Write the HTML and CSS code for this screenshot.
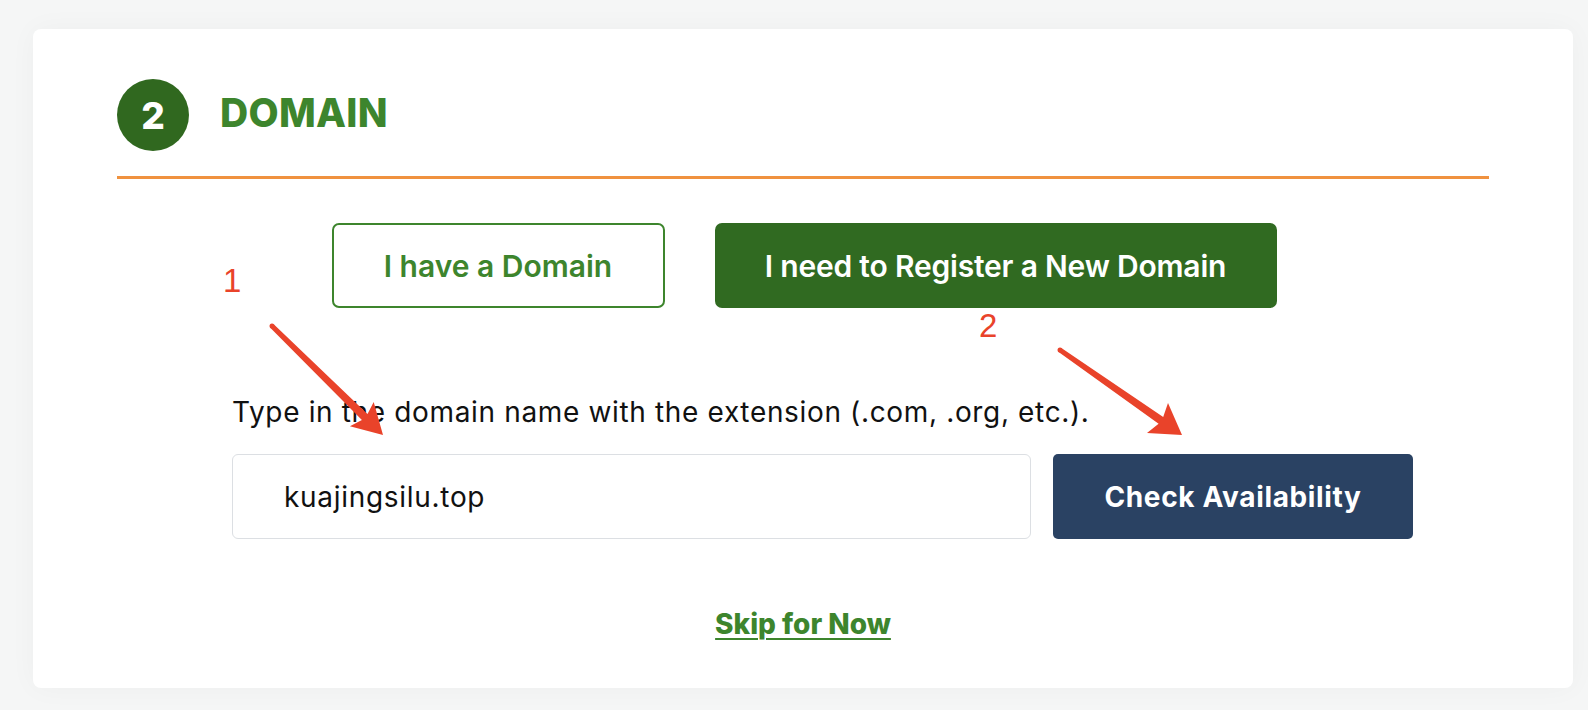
FILE: index.html
```html
<!DOCTYPE html>
<html lang="en">
<head>
<meta charset="utf-8">
<title>Domain</title>
<link rel="stylesheet" href="styles.css">
</head>
<body>
<div class="card">
  <div class="header">
    <div class="step">2</div>
    <h2 class="title">DOMAIN</h2>
  </div>
  <div class="rule"></div>
  <div class="choices">
    <button class="btn-outline">I have a Domain</button>
    <button class="btn-solid">I need to Register a New Domain</button>
  </div>
  <div class="form">
    <p class="label">Type in the domain name with the extension (.com, .org, etc.).</p>
    <div class="row">
      <div class="input">kuajingsilu.top</div>
      <button class="btn-check">Check Availability</button>
    </div>
  </div>
  <div class="skip"><a href="#">Skip for Now</a></div>

  <span class="note note-1">1</span>
  <span class="note note-2">2</span>
  <svg class="arrows" width="1540" height="659" viewBox="0 0 1540 659">
    <circle cx="239" cy="297" r="2.5" fill="#e9432a"/>
    <polygon fill="#e9432a" points="237.25,298.8 328.9,390.9 316.9,397.3 350,406 340.7,373.1 334.5,385.1 240.75,295.2"/>
    <circle cx="1027" cy="321" r="2.5" fill="#e9432a"/>
    <polygon fill="#e9432a" points="1025.6,323.05 1125.6,394.7 1114,404 1149,406 1135,374 1130.2,388.1 1028.4,318.95"/>
  </svg>
</div>
</body>
</html>
```

FILE: styles.css
```css
html, body {
  margin: 0;
  padding: 0;
}
body {
  background: #f5f6f6;
  padding: 29px 15px 22px 33px;
  font-family: "Inter", "Noto Sans", sans-serif;
  color: #111;
}
.card {
  position: relative;
  width: 1540px;
  height: 659px;
  box-sizing: border-box;
  background: #fff;
  border-radius: 8px;
  box-shadow: 0 0 28px rgba(0, 0, 0, 0.035);
  padding: 50px 84px 0;
}
.header {
  display: flex;
  align-items: center;
  gap: 31px;
  height: 72px;
}
.step {
  width: 72px;
  height: 72px;
  border-radius: 50%;
  background: #30681f;
  color: #fff;
  display: flex;
  align-items: center;
  justify-content: center;
  font-weight: 800;
  font-size: 37px;
}
.title {
  margin: 0;
  color: #3d852d;
  font-weight: 800;
  font-size: 39px;
  letter-spacing: 0.3px;
  line-height: 1;
  margin-top: -6px;
}
.rule {
  margin-top: 25px;
  height: 3px;
  background: #f0923f;
}
.choices {
  display: flex;
  justify-content: center;
  gap: 50px;
  margin-top: 44px;
  padding-left: 2px;
}
.choices button {
  height: 85px;
  border-radius: 7px;
  font-family: inherit;
  font-weight: 600;
  font-size: 30px;
  box-sizing: border-box;
  cursor: pointer;
}
.btn-outline {
  width: 333px;
  background: #fff;
  border: 2px solid #3d852d;
  color: #3d852d;
}
.btn-solid {
  width: 562px;
  background: #306a21;
  border: none;
  color: #fff;
  letter-spacing: -0.2px;
}
.form {
  margin-left: 115px;
  width: 1181px;
}
.label {
  margin: 88px 0 0;
  font-size: 28px;
  letter-spacing: 0.65px;
  line-height: 32px;
  color: #111;
}
.row {
  display: flex;
  gap: 22px;
  margin-top: 26px;
}
.input {
  width: 799px;
  height: 85px;
  box-sizing: border-box;
  border: 1px solid #dcdfe3;
  border-radius: 6px;
  padding-left: 51px;
  display: flex;
  align-items: center;
  font-size: 28px;
  letter-spacing: 0.7px;
  color: #111;
}
.btn-check {
  width: 360px;
  height: 85px;
  border: none;
  border-radius: 5px;
  background: #2a4263;
  color: #fff;
  font-family: inherit;
  font-weight: 700;
  font-size: 28px;
  letter-spacing: 0.65px;
}
.skip {
  text-align: center;
  margin-top: 68px;
  font-size: 28px;
  line-height: 34px;
}
.skip a {
  color: #3d852d;
  font-weight: 800;
  text-decoration: underline;
  text-decoration-thickness: 2px;
  text-underline-offset: 4px;
}
.note {
  position: absolute;
  color: #e9432a;
  font-family: "Liberation Sans", Arial, sans-serif;
  font-size: 33px;
  line-height: 1;
}
.note-1 {
  left: 190px;
  top: 235px;
}
.note-2 {
  left: 946px;
  top: 280px;
}
.arrows {
  position: absolute;
  left: 0;
  top: 0;
  pointer-events: none;
}
```
